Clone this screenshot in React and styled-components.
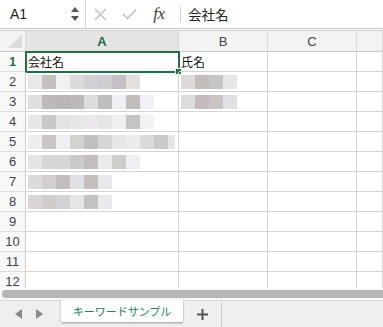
import React from "react";
import styled, { createGlobalStyle } from "styled-components";

const GlobalStyle = createGlobalStyle`
  html, body {
    margin: 0;
    padding: 0;
    background: #fff;
  }
  body {
    font-family: "Liberation Sans", "Noto Sans CJK JP", sans-serif;
    overflow: hidden;
  }
`;

const GREEN = "#1e7145";
const GRID = "#d4d4d4";

const Window = styled.div`
  width: 383px;
  height: 327px;
  display: flex;
  flex-direction: column;
  overflow: hidden;
  background: #fff;
`;

const FormulaBar = styled.div`
  height: 28px;
  display: flex;
  align-items: center;
  border-bottom: 1px solid #c6c6c6;
  flex-shrink: 0;
`;

const NameBox = styled.div`
  width: 86px;
  height: 100%;
  display: flex;
  align-items: center;
  justify-content: space-between;
  padding: 0 6px 0 10px;
  box-sizing: border-box;
  border-right: 1px solid #d6d6d6;
  font-size: 14px;
  color: #222;
`;

const Spinner = styled.div`
  display: flex;
  flex-direction: column;
  gap: 4px;
`;

const IconSlot = styled.div`
  width: ${(p) => p.$w || 28}px;
  display: flex;
  justify-content: center;
  align-items: center;
`;

const Fx = styled.span`
  font-family: "Liberation Serif", serif;
  font-style: italic;
  font-size: 17px;
  color: #404040;
  letter-spacing: -0.5px;
`;

const VSep = styled.div`
  width: 1px;
  height: 15px;
  background: #cfcfcf;
  margin: 0 7px 0 5px;
`;

const FormulaText = styled.div`
  font-family: "Noto Sans CJK JP", sans-serif;
  font-size: 13.5px;
  color: #222;
`;

const Gap = styled.div`
  height: 1px;
  flex-shrink: 0;
`;

const Grid = styled.div`
  flex: 1;
  overflow: hidden;
  border-top: 1px solid #cfcfcf;
`;

const Row = styled.div`
  display: flex;
  height: ${(p) => (p.$head ? 21 : 20)}px;
`;

const Cell = styled.div`
  position: relative;
  width: ${(p) => p.$w}px;
  flex-shrink: 0;
  ${(p) => p.$grow && "flex: 1;"}
  box-sizing: border-box;
  border-right: 1px solid ${GRID};
  border-bottom: 1px solid ${GRID};
  display: flex;
  align-items: center;
  padding-left: 2px;
  overflow: visible;
  font-family: "Noto Sans CJK JP", sans-serif;
  font-size: 12px;
  color: #111;
`;

const ColHead = styled(Cell)`
  justify-content: center;
  padding: 0;
  background: ${(p) => (p.$active ? "#e4e4e4" : "#f3f3f3")};
  border-right-color: #dadada;
  border-bottom-color: #c9c9c9;
  font-family: "Liberation Sans", sans-serif;
  font-size: 13px;
  color: ${(p) => (p.$active ? GREEN : "#444")};
  font-weight: ${(p) => (p.$active ? "bold" : "normal")};
`;

const Corner = styled(ColHead)`
  background: #f3f3f3;
  &::after {
    content: "";
    position: absolute;
    right: 3px;
    bottom: 3px;
    border-style: solid;
    border-width: 0 0 14px 14px;
    border-color: transparent transparent #dcdcdc transparent;
  }
`;

const RowHead = styled(Cell)`
  justify-content: center;
  padding: 0;
  background: #f8f8f8;
  border-right-color: #cacaca;
  border-bottom-color: #dedede;
  font-family: "Liberation Sans", sans-serif;
  font-size: 13px;
  color: ${(p) => (p.$active ? GREEN : "#3f3f50")};
  font-weight: ${(p) => (p.$active ? "bold" : "normal")};
`;

const Selection = styled.div`
  position: absolute;
  left: -1px;
  top: -1px;
  right: -2px;
  bottom: -2px;
  border: 2px solid ${GREEN};
  pointer-events: none;
  &::after {
    content: "";
    position: absolute;
    right: -4px;
    bottom: -4px;
    width: 5px;
    height: 5px;
    background: ${GREEN};
    border: 1px solid #fff;
  }
`;

const Mosaic = styled.div`
  display: flex;
  height: 14px;
`;

const Tile = styled.div`
  width: ${(p) => p.$w}px;
  height: 14px;
  background: ${(p) => p.$c};
`;

const ScrollArea = styled.div`
  height: 12px;
  flex-shrink: 0;
  background: #f7f7f7;
  display: flex;
  align-items: center;
  padding-left: 2px;
`;

const Thumb = styled.div`
  flex: 1;
  height: 8px;
  border-radius: 4px 0 0 4px;
  background: #b5b5b5;
`;

const TabBar = styled.div`
  height: 27px;
  flex-shrink: 0;
  background: #efefef;
  border-top: 1px solid #d8d8d8;
  display: flex;
  align-items: flex-start;
  box-sizing: border-box;
`;

const NavArrows = styled.div`
  width: 61px;
  height: 25px;
  display: flex;
  align-items: center;
  gap: 14px;
  padding-left: 15px;
  box-sizing: border-box;
`;

const Tab = styled.div`
  width: 122px;
  height: 22px;
  margin-top: -1px;
  background: #fff;
  box-shadow: 0 1px 2px rgba(0, 0, 0, 0.35);
  display: flex;
  align-items: center;
  justify-content: center;
  font-family: "Noto Sans CJK JP", sans-serif;
  font-size: 11px;
  color: #21855a;
`;

const AddTab = styled.div`
  width: 38px;
  height: 25px;
  display: flex;
  align-items: center;
  justify-content: center;
  border-right: 1px solid #d0d0d0;
  margin-top: 1px;
`;

const COLS = [
  { key: "A", w: 153 },
  { key: "B", w: 89 },
  { key: "C", w: 89 },
];

// 伏せ字のモザイク（色, 幅）
const mosaicA = {
  2: ["#e9e8e8", "#c4c0bf", "#f2f0f3", "#dcdbdb", "#d3cfd2", "#d0cdd0", "#c4c0c3", "#e1e0df"],
  3: ["#e0dfe0", "#bdb8ba", "#bab5b8", "#bcb7ba", "#dcdcdc", "#c0bdbe", "#f0eef0", "#c3bcbd", "#f2f0f4"],
  4: ["#e6e6e6", "#c9c7c8", "#e3e3e3", "#e7e7e7", "#eae8ea", "#e6e4e6", "#f0f0ee", "#c6c3c2", "#f2f2f4"],
  5: ["#eeeded", "#c8c5c4", "#f0eff2", "#d4d2d1", "#c2bfc1", "#d7d5d7", "#e9e6ea", "#ebebeb", "#dcd9da", "#cacaca", ["#e6e6e6", 7]],
  6: ["#e4e4e4", "#d6d6d6", "#d6d6d6", "#ccc9cb", "#c2bec0", "#eaeaec", "#d0cdcd", "#f0f0f3"],
  7: ["#dbdbdb", "#d2cfce", "#c4bfbd", "#e0dfe3", "#c5bfc0", "#e8e7ea"],
  8: ["#d8d4d7", "#d0ccca", "#d3d2d6", "#e5e5e7", "#c6c1c1", "#e9e8ea"],
};

const mosaicB = {
  2: ["#dedada", "#c1bdbd", "#c7c4c6", "#e6e6e6"],
  3: ["#dcdcdc", "#c3b9bf", "#c9c3c4", "#e0dfe1"],
};

const Blur = ({ colors }) =>
  colors ? (
    <Mosaic>
      {colors.map((c, i) =>
        Array.isArray(c) ? <Tile key={i} $c={c[0]} $w={c[1]} /> : <Tile key={i} $c={c} $w={14} />
      )}
    </Mosaic>
  ) : null;

const CancelIcon = () => (
  <svg width="13" height="13" viewBox="0 0 13 13">
    <path d="M1 1 L12 12 M12 1 L1 12" stroke="#c4c4c4" strokeWidth="1.6" fill="none" />
  </svg>
);

const CheckIcon = () => (
  <svg width="15" height="12" viewBox="0 0 15 12">
    <path d="M1 6 L5.5 10.5 L14 1.5" stroke="#c4c4c4" strokeWidth="1.7" fill="none" />
  </svg>
);

const Tri = ({ dir }) => (
  <svg width="7" height="10" viewBox="0 0 7 10">
    {dir === "left" ? (
      <path d="M7 0 L0 5 L7 10 Z" fill="#8a8a8a" />
    ) : (
      <path d="M0 0 L7 5 L0 10 Z" fill="#8a8a8a" />
    )}
  </svg>
);

const SpinArrow = ({ up }) => (
  <svg width="8" height="5" viewBox="0 0 8 5">
    {up ? <path d="M0 5 L4 0 L8 5 Z" fill="#555" /> : <path d="M0 0 L4 5 L8 0 Z" fill="#555" />}
  </svg>
);

const Plus = () => (
  <svg width="11" height="11" viewBox="0 0 11 11">
    <path d="M5.5 0 V11 M0 5.5 H11" stroke="#555" strokeWidth="2" />
  </svg>
);

export default function App() {
  const rows = Array.from({ length: 12 }, (_, i) => i + 1);

  return (
    <Window>
      <GlobalStyle />
      <FormulaBar>
        <NameBox>
          A1
          <Spinner>
            <SpinArrow up />
            <SpinArrow />
          </Spinner>
        </NameBox>
        <IconSlot $w={29}>
          <CancelIcon />
        </IconSlot>
        <IconSlot $w={28}>
          <CheckIcon />
        </IconSlot>
        <IconSlot $w={32}>
          <Fx>fx</Fx>
        </IconSlot>
        <VSep />
        <FormulaText>会社名</FormulaText>
      </FormulaBar>
      <Gap />
      <Grid>
        <Row $head>
          <Corner $w={26} />
          {COLS.map((c) => (
            <ColHead key={c.key} $w={c.w} $active={c.key === "A"}>
              {c.key}
            </ColHead>
          ))}
          <ColHead $grow />
        </Row>
        {rows.map((r) => (
          <Row key={r}>
            <RowHead $w={26} $active={r === 1}>
              {r}
            </RowHead>
            <Cell $w={153}>
              {r === 1 && "会社名"}
              {r === 1 && <Selection />}
              <Blur colors={mosaicA[r]} />
            </Cell>
            <Cell $w={89}>
              {r === 1 && "氏名"}
              <Blur colors={mosaicB[r]} />
            </Cell>
            <Cell $w={89} />
            <Cell $grow />
          </Row>
        ))}
      </Grid>
      <ScrollArea>
        <Thumb />
      </ScrollArea>
      <TabBar>
        <NavArrows>
          <Tri dir="left" />
          <Tri dir="right" />
        </NavArrows>
        <Tab>キーワードサンプル</Tab>
        <AddTab>
          <Plus />
        </AddTab>
      </TabBar>
    </Window>
  );
}
